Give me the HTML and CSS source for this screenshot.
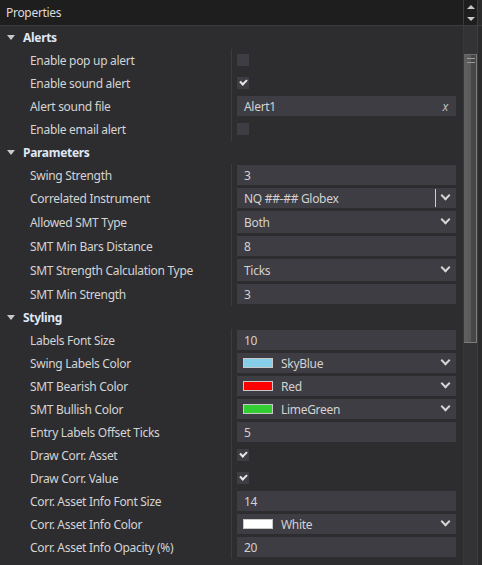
FILE: index.html
```html
<!DOCTYPE html>
<html lang="en">
<head>
    <meta charset="UTF-8">
    <title>Properties</title>
    <link rel="stylesheet" href="styles.css">
</head>
<body>
    <div class="header">
        <div class="title">Properties</div>
        <div class="hdr-btns">
            <span class="tri-up"></span>
            <span class="tri-down"></span>
        </div>
        <div class="edge"></div>
    </div>
    <div class="panel">
        <div class="list">
            <div class="cat"><span class="caret"></span>Alerts</div>
            <div class="section">
                <div class="row"><div class="lbl">Enable pop up alert</div><div class="val"><span class="chk"></span></div></div>
                <div class="row"><div class="lbl">Enable sound alert</div><div class="val"><span class="chk on"></span></div></div>
                <div class="row"><div class="lbl">Alert sound file</div><div class="val"><div class="box">Alert1<span class="clear">x</span></div></div></div>
                <div class="row"><div class="lbl">Enable email alert</div><div class="val"><span class="chk"></span></div></div>
            </div>

            <div class="cat"><span class="caret"></span>Parameters</div>
            <div class="section">
                <div class="row"><div class="lbl">Swing Strength</div><div class="val"><div class="box">3</div></div></div>
                <div class="row"><div class="lbl">Correlated Instrument</div><div class="val"><div class="box combo">NQ ##-## Globex<span class="sep"></span><span class="chev"></span></div></div></div>
                <div class="row tall"><div class="lbl">Allowed SMT Type</div><div class="val"><div class="box combo">Both<span class="chev"></span></div></div></div>
                <div class="row"><div class="lbl">SMT Min Bars Distance</div><div class="val"><div class="box">8</div></div></div>
                <div class="row tall"><div class="lbl">SMT Strength Calculation Type</div><div class="val"><div class="box combo">Ticks<span class="chev"></span></div></div></div>
                <div class="row"><div class="lbl">SMT Min Strength</div><div class="val"><div class="box">3</div></div></div>
            </div>

            <div class="cat"><span class="caret"></span>Styling</div>
            <div class="section">
                <div class="row"><div class="lbl">Labels Font Size</div><div class="val"><div class="box">10</div></div></div>
                <div class="row"><div class="lbl">Swing Labels Color</div><div class="val"><div class="box combo"><span class="swatch sky"></span>SkyBlue<span class="chev"></span></div></div></div>
                <div class="row"><div class="lbl">SMT Bearish Color</div><div class="val"><div class="box combo"><span class="swatch red"></span>Red<span class="chev"></span></div></div></div>
                <div class="row"><div class="lbl">SMT Bullish Color</div><div class="val"><div class="box combo"><span class="swatch lime"></span>LimeGreen<span class="chev"></span></div></div></div>
                <div class="row"><div class="lbl">Entry Labels Offset Ticks</div><div class="val"><div class="box">5</div></div></div>
                <div class="row"><div class="lbl">Draw Corr. Asset</div><div class="val"><span class="chk on"></span></div></div>
                <div class="row"><div class="lbl">Draw Corr. Value</div><div class="val"><span class="chk on"></span></div></div>
                <div class="row"><div class="lbl">Corr. Asset Info Font Size</div><div class="val"><div class="box">14</div></div></div>
                <div class="row"><div class="lbl">Corr. Asset Info Color</div><div class="val"><div class="box combo"><span class="swatch white"></span>White<span class="chev"></span></div></div></div>
                <div class="row"><div class="lbl">Corr. Asset Info Opacity (%)</div><div class="val"><div class="box">20</div></div></div>
            </div>
        </div>
        <div class="vscroll">
            <div class="thumb"><span class="grip"></span></div>
        </div>
        <div class="edge"></div>
    </div>
</body>
</html>
```

FILE: styles.css
```css
*{
    margin: 0;
    padding: 0;
    box-sizing: border-box;
}
body{
    width: 482px;
    height: 565px;
    overflow: hidden;
    background-color: #2d2d30;
    color: #d4d4d4;
    font-family: "Noto Sans", "Open Sans", sans-serif;
    font-size: 12px;
    letter-spacing: -0.3px;
}
.header{
    height: 26px;
    display: flex;
    background-color: #1e1e1e;
    border-bottom: 1px solid #3c3c3c;
}
.title{
    flex: 1;
    padding-left: 6px;
    line-height: 25px;
    color: #dcdcdc;
}
.hdr-btns{
    width: 14px;
    border-left: 1px solid #3a3a3a;
    display: flex;
    flex-direction: column;
    align-items: center;
    padding-top: 5px;
    gap: 8px;
}
.tri-up{
    width: 0;
    height: 0;
    border-left: 4px solid transparent;
    border-right: 4px solid transparent;
    border-bottom: 4px solid #c8c8c8;
}
.tri-down{
    width: 0;
    height: 0;
    border-left: 4px solid transparent;
    border-right: 4px solid transparent;
    border-top: 4px solid #c8c8c8;
}
.edge{
    width: 5px;
    border-left: 1px solid #3e3e3e;
    background-color: #2b2b2b;
}
.panel{
    display: flex;
    height: 539px;
}
.list{
    flex: 1;
}
.cat{
    height: 23px;
    display: flex;
    align-items: center;
    padding-left: 7px;
    font-weight: bold;
    color: #dfe7f5;
}
.caret{
    width: 0;
    height: 0;
    border-left: 4.5px solid transparent;
    border-right: 4.5px solid transparent;
    border-top: 5px solid #c8c8c8;
    margin-right: 8px;
}
.row{
    height: 23px;
    display: flex;
}
.row.tall{
    height: 25px;
}
.lbl{
    width: 232px;
    padding-left: 30px;
    border-right: 1px solid #3d3d40;
    display: flex;
    align-items: center;
    white-space: nowrap;
}
.val{
    flex: 1;
    padding: 1px 7px 0 5px;
}
.box{
    height: 20px;
    background-color: #3e3d43;
    display: flex;
    align-items: center;
    padding-left: 7px;
    position: relative;
    color: #d2d2d2;
}
.row.tall .box{
    height: 22px;
}
.chk{
    display: block;
    width: 12px;
    height: 12px;
    margin-top: 4px;
    background-color: #3e3d43;
    position: relative;
}
.chk.on::after{
    content: "";
    position: absolute;
    left: 3px;
    top: 2px;
    width: 5px;
    height: 3px;
    border-left: 2px solid #e8e8e8;
    border-bottom: 2px solid #e8e8e8;
    transform: rotate(-45deg);
}
.clear{
    margin-left: auto;
    margin-right: 8px;
    font-style: italic;
    color: #bdbdbd;
}
.sep{
    position: absolute;
    right: 20px;
    top: 1px;
    bottom: 1px;
    width: 1px;
    background-color: #cfcfcf;
}
.chev{
    position: absolute;
    right: 7px;
    top: 50%;
    width: 7px;
    height: 7px;
    margin-top: -6px;
    border-right: 2px solid #d4d4d4;
    border-bottom: 2px solid #d4d4d4;
    transform: rotate(45deg);
}
.swatch{
    width: 30px;
    height: 10px;
    border: 1px solid #c8c8c8;
    margin-left: -1px;
    margin-right: 8px;
}
.sky{ background-color: #87ceeb; }
.red{ background-color: #ff0000; }
.lime{ background-color: #32cd32; }
.white{ background-color: #ffffff; }
.vscroll{
    width: 14px;
    background-color: #333336;
    border-left: 1px solid #38383a;
    padding-top: 28px;
}
.thumb{
    height: 289px;
    background: linear-gradient(to right, #606060 0, #5a5a5a 55%, #474747 56%, #474747 100%);
    border-right: 1px solid #7c7c7c;
    border-bottom: 1px solid #7c7c7c;
    border-top: 1px solid #6c6c6c;
    position: relative;
}
.grip{
    position: absolute;
    left: 3px;
    top: 3px;
    width: 8px;
    height: 5px;
    border-top: 1px solid #9a9a9a;
    border-bottom: 1px solid #9a9a9a;
}
```
